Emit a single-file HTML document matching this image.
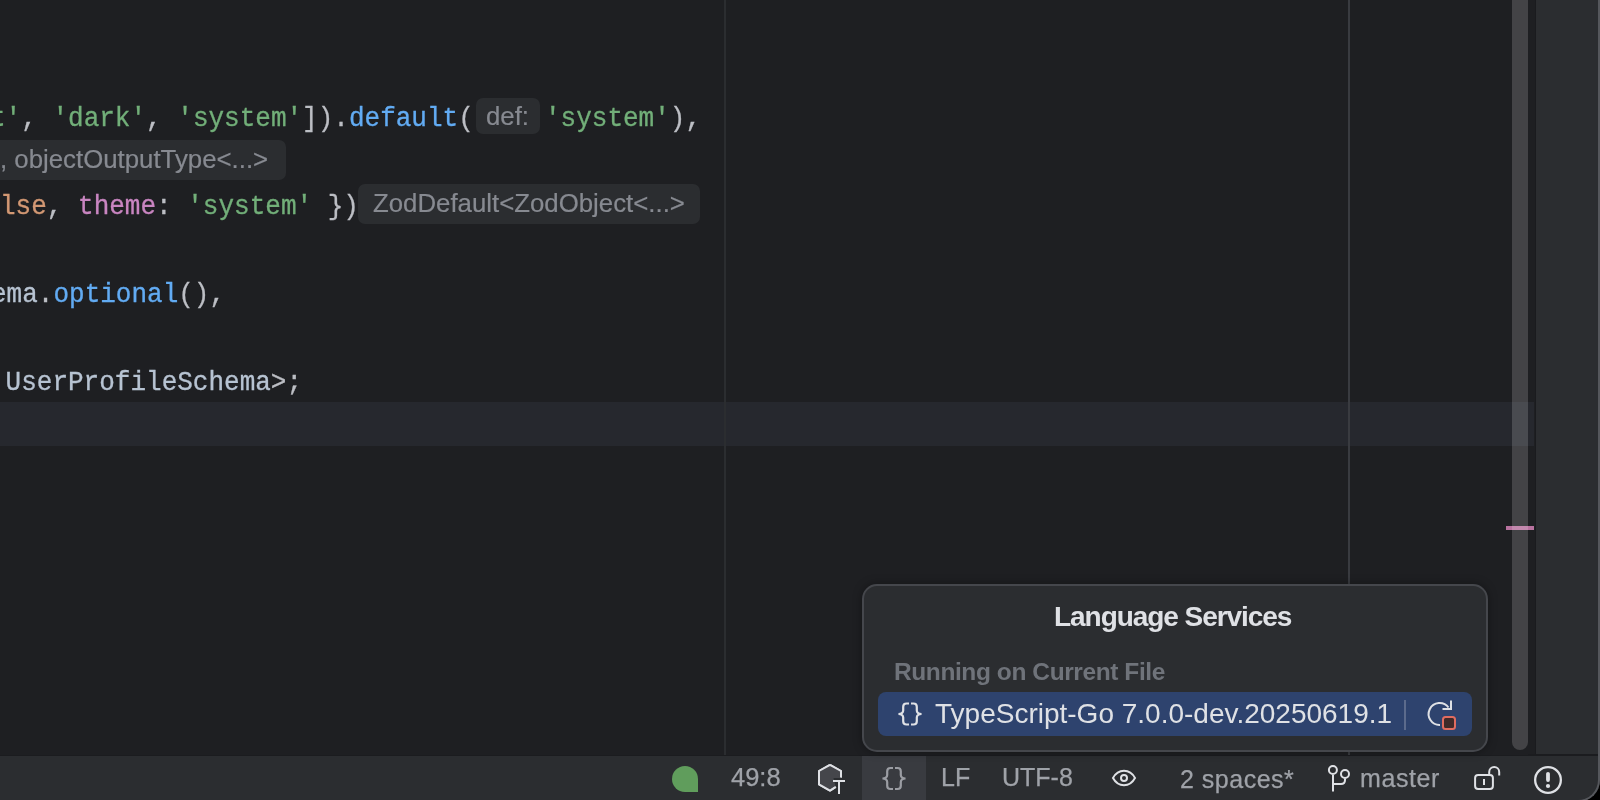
<!DOCTYPE html>
<html><head><meta charset="utf-8">
<style>
*{margin:0;padding:0;box-sizing:border-box}
html,body{width:1600px;height:800px;overflow:hidden;background:#000}
#win{position:absolute;left:0;top:0;width:1600px;height:800px;background:#1e1f22;overflow:hidden}
.abs{position:absolute}
.code{position:absolute;font-family:"Liberation Mono",monospace;font-size:26px;line-height:44px;height:44px;white-space:pre;color:#bcbec4;transform:scaleY(1.06);transform-origin:0 28.9px;will-change:transform;-webkit-text-stroke:0.3px currentColor}
.txt{position:absolute;font-family:"Liberation Sans",sans-serif;line-height:1;white-space:pre;will-change:transform}
.s{color:#72af79}.k{color:#d39874}.f{color:#62abf3}.p{color:#c985c1}.t{color:#b7c3d2}
.hint{position:absolute;background:#2b2d30;border-radius:7px}
.ht{position:absolute;will-change:transform;-webkit-text-stroke:0.2px currentColor;color:#878a91;font-family:"Liberation Sans",sans-serif;font-size:25.8px;line-height:1;white-space:pre}
.sb{position:absolute;will-change:transform;-webkit-text-stroke:0.25px currentColor;font-family:"Liberation Sans",sans-serif;font-size:25px;color:#9fa2a8;white-space:pre;line-height:1}
svg{position:absolute;left:0;top:0;overflow:visible}
</style></head><body>
<div id="win">
  <!-- caret row -->
  <div class="abs" style="left:0;top:402px;width:1534px;height:44px;background:#26282e"></div>
  <!-- guides -->
  <div class="abs" style="left:724px;top:0;width:2px;height:755px;background:#2b2d30"></div>
  <div class="abs" style="left:1348px;top:0;width:2px;height:755px;background:#393b40"></div>

  <!-- code lines -->
  <div class="code" style="left:-10.5px;top:96.8px"><span class="s">t'</span>, <span class="s">'dark'</span>, <span class="s">'system'</span>]).<span class="f">default</span>(</div>
  <div class="hint" style="left:476px;top:98px;width:64px;height:36px"></div>
  <div class="ht" style="left:485.9px;top:104.2px">def:</div>
  <div class="code" style="left:545px;top:96.8px"><span class="s">'system'</span>),</div>

  <div class="hint" style="left:-10px;top:140px;width:296px;height:40px"></div>
  <div class="ht" style="left:-0.2px;top:147px">, objectOutputType&lt;...&gt;</div>

  <div class="code" style="left:0.4px;top:184.8px"><span class="k">lse</span>, <span class="p">theme</span>: <span class="s">'system'</span> })</div>
  <div class="hint" style="left:358px;top:184px;width:342px;height:40px"></div>
  <div class="ht" style="left:373.3px;top:190.5px">ZodDefault&lt;ZodObject&lt;...&gt;</div>

  <div class="code" style="left:-9.3px;top:272.8px"><span class="t">ema</span>.<span class="f">optional</span>(),</div>
  <div class="code" style="left:-9.8px;top:360.8px"> <span class="t">UserProfileSchema</span>&gt;;</div>

  <!-- scrollbar / right panel -->
  <div class="abs" style="left:1535px;top:0;width:1px;height:755px;background:#1a1b1e"></div>
  <div class="abs" style="left:1536px;top:0;width:64px;height:754px;background:#2b2d30"></div>
  <div class="abs" style="left:1506px;top:526px;width:28px;height:4px;background:#b8729f"></div>
  <div class="abs" style="left:1512px;top:-10px;width:16px;height:760px;background:rgba(255,255,255,0.165);border-radius:8px"></div>
  

  <!-- status bar -->
  <div class="abs" style="left:0;top:755px;width:1600px;height:1px;background:#1b1c1f"></div>
  <div class="abs" style="left:1528px;top:754px;width:72px;height:1px;background:#1b1c1f"></div>
  <div class="abs" style="left:0;top:756px;width:1600px;height:44px;background:#2b2d30"></div>
  <div class="abs" style="left:862px;top:756px;width:64px;height:44px;background:#393b40"></div>

  <div class="abs" style="left:672px;top:766px;width:26px;height:26px;background:#609d5c;border-radius:13px 13px 0 13px"></div>
  <div class="sb" style="left:731px;top:765.4px;font-size:25.5px">49:8</div>
  <div class="sb" style="left:941.4px;top:765.3px">LF</div>
  <div class="sb" style="left:1002.4px;top:765.3px">UTF-8</div>
  <div class="sb" style="left:1180.25px;top:766.6px;letter-spacing:0.5px">2 spaces*</div>
  <div class="sb" style="left:1360px;top:765.8px;letter-spacing:0.6px">master</div>

  <svg width="1600" height="800" viewBox="0 0 1600 800">
    <!-- hexagon T icon -->
    <path d="M830 764.8 L841 771 V777.5 M835.8 787 L830 790.6 L819 784.3 V771 L830 764.8" fill="#45464b" stroke="#dfe1e5" stroke-width="2" stroke-linejoin="round"/>
    <path d="M830 764.8 L841 771 V778 H832 V787.5 L830 790.6 L819 784.3 V771 Z" fill="#45464b"/>
    <path d="M830 764.8 L841 771 V777.5 M835.8 787 L830 790.6 L819 784.3 V771 L830 764.8" fill="none" stroke="#dfe1e5" stroke-width="2" stroke-linejoin="round"/>
    <path d="M833 781 H845 M839 781 V794" fill="none" stroke="#dfe1e5" stroke-width="2"/>
    <!-- braces status -->
    <path d="M893 768 H890.5 Q887.2 768 887.2 771.3 V775 Q887.2 778.2 882.5 778.5 Q887.2 778.8 887.2 782 V785.7 Q887.2 789 890.5 789 H893 M895 768 H897.5 Q900.8 768 900.8 771.3 V775 Q900.8 778.2 905.5 778.5 Q900.8 778.8 900.8 782 V785.7 Q900.8 789 897.5 789 H895" fill="none" stroke="#9b9da3" stroke-width="2.2"/>
    <!-- eye -->
    <path d="M1113 778 C1116 772.5 1120 770.8 1124 770.8 C1128 770.8 1132 772.5 1135 778 C1132 783.5 1128 785.2 1124 785.2 C1120 785.2 1116 783.5 1113 778 Z" fill="none" stroke="#dfe1e5" stroke-width="2"/>
    <circle cx="1124" cy="778" r="3" fill="none" stroke="#dfe1e5" stroke-width="2"/>
    <!-- git -->
    <circle cx="1332.9" cy="770" r="4" fill="none" stroke="#dfe1e5" stroke-width="2"/>
    <circle cx="1345" cy="774" r="4" fill="none" stroke="#dfe1e5" stroke-width="2"/>
    <path d="M1333 775 V791.5 M1345 778.5 V780 Q1345 784 1341 784 H1333" fill="none" stroke="#dfe1e5" stroke-width="2"/>
    <!-- lock -->
    <rect x="1475.1" y="775" width="17.8" height="14" rx="3" fill="none" stroke="#dfe1e5" stroke-width="2"/>
    <path d="M1484 779 V785 M1489.2 774 V772 A5 5 0 0 1 1499.2 772 V775.5" fill="none" stroke="#dfe1e5" stroke-width="2"/>
    <!-- warning -->
    <circle cx="1548" cy="780" r="12.85" fill="none" stroke="#dfe1e5" stroke-width="2.3"/>
    <path d="M1548 773.8 V780.1" stroke="#dfe1e5" stroke-width="3.8" stroke-linecap="round"/>
    <circle cx="1548" cy="786" r="2.1" fill="#dfe1e5"/>
  </svg>

  <!-- right border of window -->
  <div class="abs" style="left:-10px;top:-10px;width:1610px;height:812px;border-right:2px solid #55575c;border-bottom:2px solid #55575c;border-bottom-right-radius:22px;box-shadow:0 0 0 60px #000"></div>

  <!-- popup -->
    <div class="abs" style="left:862px;top:584px;width:626px;height:168px;border:2px solid #45474c;border-radius:15px;background:#2b2d30;box-shadow:0 0 10px rgba(0,0,0,0.35)"></div>
  <div class="txt" style="left:1054.2px;top:602.5px;font-weight:bold;font-size:28px;letter-spacing:-1.05px;color:#dfe1e5">Language Services</div>
  <div class="txt" style="left:894px;top:660.3px;font-weight:bold;font-size:24.5px;letter-spacing:-0.41px;color:#6f737a">Running on Current File</div>
  <div class="abs" style="left:878px;top:692px;width:594px;height:44px;border-radius:8px;background:#2e436e"></div>
  <div class="txt" style="left:935px;top:700.3px;font-size:28px;color:#dfe1e5">TypeScript-Go 7.0.0-dev.20250619.1</div>
  <div class="abs" style="left:1404px;top:700px;width:2px;height:30px;background:#5c6b8c"></div>
  <svg width="1600" height="800" viewBox="0 0 1600 800">
    <path d="M909 703.5 H906.5 Q903.2 703.5 903.2 706.8 V710.5 Q903.2 713.7 898.5 714 Q903.2 714.3 903.2 717.5 V721.2 Q903.2 724.5 906.5 724.5 H909 M911 703.5 H913.5 Q916.8 703.5 916.8 706.8 V710.5 Q916.8 713.7 921.5 714 Q916.8 714.3 916.8 717.5 V721.2 Q916.8 724.5 913.5 724.5 H911" fill="none" stroke="#dfe1e5" stroke-width="2.2"/>
    <path d="M1440 725 A11 11 0 1 1 1448.5 707.5" fill="none" stroke="#dfe1e5" stroke-width="2"/>
    <path d="M1451 700.5 V709 H1442.5" fill="none" stroke="#dfe1e5" stroke-width="2"/>
    <rect x="1443" y="717" width="12" height="12" rx="2.5" fill="#3f2a2a" stroke="#e06c60" stroke-width="2"/>
  </svg>
</div>
</body></html>
